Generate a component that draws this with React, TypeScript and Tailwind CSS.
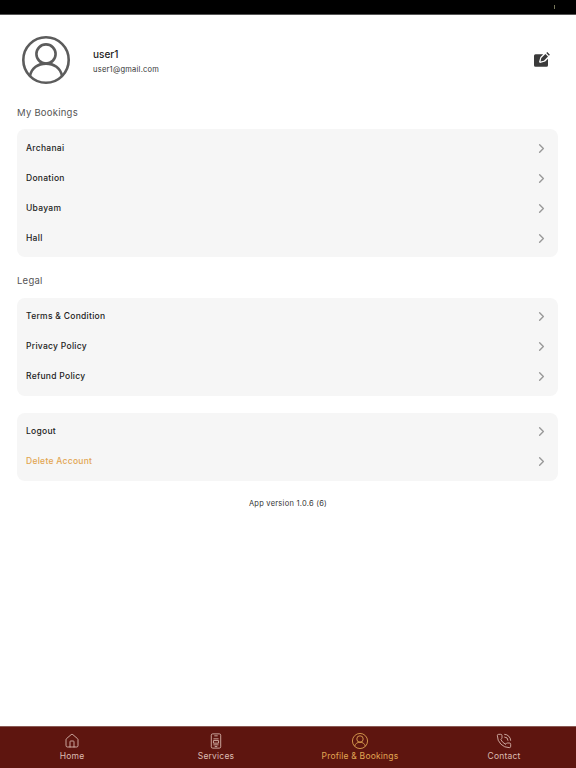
import { ChevronRight, House, PhoneCall } from "lucide-react";

const bookings = ["Archanai", "Donation", "Ubayam", "Hall"];
const legal = ["Terms & Condition", "Privacy Policy", "Refund Policy"];

function UserIcon({ className }: { className: string }) {
  return (
    <svg viewBox="0 0 48 48" fill="none" stroke="currentColor" strokeWidth="2.6" className={className}>
      <circle cx="24" cy="24" r="22.7" />
      <circle cx="24" cy="18" r="9.6" />
      <path d="M8 40C9.500 32 16 27.600 24 27.600S38.500 32 40 40" />
    </svg>
  );
}

function EditIcon() {
  return (
    <svg viewBox="0 0 16 16" className="h-[16px] w-[16px] text-[#3a3a3a]" fill="currentColor">
      <path d="M1.500 2.200h7.700L6.400 5 5 10l1 1 5.200-1.400 2.800-2.800v6.400a1.500 1.500 0 0 1-1.500 1.500h-11A1.500 1.500 0 0 1 0 13.200V3.700a1.500 1.500 0 0 1 1.500-1.500z" />
      <path d="M7.300 6.100 11.400 2l2.600 2.600-4.100 4.100-3.400.9zM12.300 1.100l1-1 2.600 2.600-1 1z" />
    </svg>
  );
}

function ServicesIcon() {
  return (
    <svg viewBox="0 0 14 18" fill="none" stroke="currentColor" strokeWidth="1" className="h-[16px] w-[12px]">
      <rect x="1.500" y="0.700" width="11" height="16.600" rx="1.600" />
      <path d="M5 3h4M4 6.500h6M4 8.500h6v3H4zM4 13.500h6M5.500 15.500h3" />
    </svg>
  );
}

function Row({ label, accent }: { label: string; accent?: boolean }) {
  return (
    <div className="flex h-[30px] items-center justify-between pl-[9px] pr-[9px]">
      <span className={`text-[8.5px] font-[450] tracking-[0.28px] ${accent ? "text-[#e2a552]" : "text-[#222222]"}`}>
        {label}
      </span>
      <ChevronRight className="h-[15px] w-[15px] text-[#999999]" strokeWidth={2.2} />
    </div>
  );
}

function Card({ items, className }: { items: string[]; className: string }) {
  return (
    <div className={`ml-[17px] mr-[18px] rounded-[8px] bg-[#f6f6f6] ${className}`}>
      {items.map(i => (
        <Row key={i} label={i} accent={i === "Delete Account"} />
      ))}
    </div>
  );
}

function Tab({ label, active, children }: { label: string; active?: boolean; children: React.ReactNode }) {
  return (
    <div className={`flex flex-1 flex-col items-center pt-[6px] ${active ? "text-[#e0a553]" : "text-[#dcbcb2]"}`}>
      <div className="flex h-[16px] items-center justify-center">{children}</div>
      <span className="mt-[1px] text-[8.5px] leading-[12px] tracking-[0.2px]">{label}</span>
    </div>
  );
}

export default function App() {
  return (
    <main
      className="flex h-[768px] w-[576px] flex-col overflow-hidden bg-white"
      style={{ fontFamily: "Inter, sans-serif" }}
    >
      <div className="flex h-[15px] shrink-0 items-center justify-end border-b border-[#555555] bg-black pr-[21px]">
        <div className="h-[4px] w-[1px] bg-[#77775a]" />
      </div>

      <div className="flex h-[84px] items-center pl-[22px] pr-[26px] pt-[6px]">
        <UserIcon className="h-[48px] w-[48px] text-[#5c5c5c]" />
        <div className="ml-[23px] flex-1 pt-[3px]">
          <div className="text-[10px] font-medium leading-[14px] text-[#1c1c1c]">user1</div>
          <div className="mt-[3px] text-[7.5px] leading-[12px] tracking-[0.25px] text-[#333333]">user1@gmail.com</div>
        </div>
        <EditIcon />
      </div>

      <h2 className="mb-[9px] ml-[17px] mt-[7px] text-[9.5px] font-normal leading-[14px] tracking-[0.25px] text-[#555555]">
        My Bookings
      </h2>
      <Card items={bookings} className="py-[4px]" />

      <h2 className="mb-[10px] ml-[17px] mt-[17px] text-[9.5px] font-normal leading-[14px] tracking-[0.25px] text-[#555555]">
        Legal
      </h2>
      <Card items={legal} className="pb-[5px] pt-[3px]" />

      <Card items={["Logout", "Delete Account"]} className="mt-[17px] pb-[5px] pt-[3px]" />

      <p className="mt-[17px] text-center text-[7.5px] leading-[12px] tracking-[0.25px] text-[#333333]">
        App version 1.0.6 (6)
      </p>

      <nav className="mt-auto flex h-[42px] shrink-0 border-t border-[#8a5a55] bg-[#5e150f]">
        <Tab label="Home">
          <House className="h-[16px] w-[16px]" strokeWidth={1.3} />
        </Tab>
        <Tab label="Services">
          <ServicesIcon />
        </Tab>
        <Tab label="Profile & Bookings" active>
          <UserIcon className="h-[16px] w-[16px]" />
        </Tab>
        <Tab label="Contact">
          <PhoneCall className="h-[16px] w-[16px]" strokeWidth={1.3} />
        </Tab>
      </nav>
    </main>
  );
}
